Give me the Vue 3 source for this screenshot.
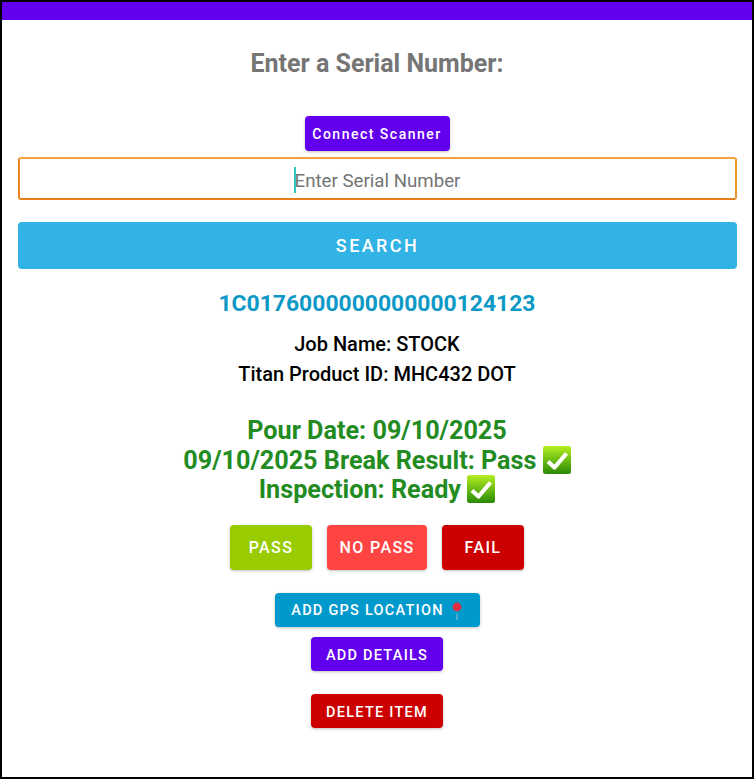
<script setup>
import { ref } from 'vue';

const serial = ref('');

const result = {
  serial: '1C0176000000000000124123',
  job: 'Job Name: STOCK',
  product: 'Titan Product ID: MHC432 DOT',
  pourDate: 'Pour Date: 09/10/2025',
  breakResult: '09/10/2025 Break Result: Pass',
  inspection: 'Inspection: Ready',
};
</script>

<template>
  <div class="frame">
    <div class="top-bar"></div>
    <main class="content">
      <h1 class="title">Enter a Serial Number:</h1>
      <button class="btn btn-connect">Connect Scanner</button>
      <div class="input-wrap">
        <input v-model="serial" class="serial-input" type="text" placeholder="Enter Serial Number">
        <span v-if="!serial" class="caret"></span>
      </div>
      <button class="btn btn-search">SEARCH</button>

      <div class="serial">{{ result.serial }}</div>
      <div class="info first">{{ result.job }}</div>
      <div class="info">{{ result.product }}</div>

      <div class="status">
        <div class="status-line">{{ result.pourDate }}</div>
        <div class="status-line">
          {{ result.breakResult }}
          <svg class="check" viewBox="0 0 28 28">
            <defs>
              <linearGradient id="checkFill" x1="0" y1="0" x2="0" y2="1">
                <stop offset="0" stop-color="#b5ee22" />
                <stop offset="0.55" stop-color="#66b812" />
                <stop offset="1" stop-color="#2a8a05" />
              </linearGradient>
            </defs>
            <rect width="28" height="28" rx="2.5" fill="url(#checkFill)" />
            <path d="M5 15.5 L11.5 21.5 L23.5 7.5" fill="none" stroke="#fff" stroke-width="4.2" stroke-linejoin="round" />
          </svg>
        </div>
        <div class="status-line">
          {{ result.inspection }}
          <svg class="check" viewBox="0 0 28 28">
            <rect width="28" height="28" rx="2.5" fill="url(#checkFill)" />
            <path d="M5 15.5 L11.5 21.5 L23.5 7.5" fill="none" stroke="#fff" stroke-width="4.2" stroke-linejoin="round" />
          </svg>
        </div>
      </div>

      <div class="result-buttons">
        <button class="btn btn-result btn-pass">PASS</button>
        <button class="btn btn-result btn-nopass">NO PASS</button>
        <button class="btn btn-result btn-fail">FAIL</button>
      </div>

      <button class="btn btn-small btn-gps">
        <span>ADD GPS LOCATION</span>
        <svg class="pin" viewBox="0 0 12 18">
          <path d="M6 8 L6.6 17.5 L5.4 17.5 Z" fill="#b9c4cc" />
          <circle cx="6" cy="5" r="4.4" fill="#dd2e44" />
        </svg>
      </button>
      <button class="btn btn-small btn-details">ADD DETAILS</button>
      <button class="btn btn-small btn-delete">DELETE ITEM</button>
    </main>
  </div>
</template>

<style scoped>
.frame {
  box-sizing: border-box;
  width: 754px;
  height: 779px;
  border: 2px solid #000;
  background: #fff;
  font-family: Roboto, "Liberation Sans", sans-serif;
}

.top-bar {
  height: 18px;
  background: #6200ee;
}

.content {
  display: flex;
  flex-direction: column;
  align-items: center;
  padding: 0 16px;
}

.title {
  margin: 28px 0 0;
  font-size: 25px;
  line-height: 32px;
  font-weight: 700;
  color: #757575;
}

.btn {
  border: none;
  border-radius: 4px;
  color: #fff;
  font-family: inherit;
  font-weight: 500;
  cursor: pointer;
  box-shadow: 0 1px 3px rgba(0, 0, 0, 0.25);
}

.btn-connect {
  margin-top: 36px;
  width: 145px;
  height: 35px;
  padding: 0;
  background: #6200ee;
  font-size: 14px;
  letter-spacing: 1.5px;
}

.input-wrap {
  position: relative;
  align-self: flex-start;
  margin-top: 6px;
  width: 719px;
}

.serial-input {
  display: block;
  box-sizing: border-box;
  width: 100%;
  height: 43px;
  padding: 5px 0 0;
  border: 2px solid;
  border-color: #f4a33c #ee9530 #e57d18 #e9851f;
  border-radius: 3px;
  outline: none;
  text-align: center;
  font-family: inherit;
  font-size: 18.7px;
  color: #333;
}

.serial-input::placeholder {
  color: #757575;
  opacity: 1;
}

.caret {
  position: absolute;
  left: 276px;
  top: 10px;
  width: 2px;
  height: 26px;
  background: #2fc4c0;
}

.btn-search {
  align-self: flex-start;
  margin-top: 22px;
  width: 719px;
  height: 47px;
  background: #31b3e5;
  font-size: 18px;
  letter-spacing: 2.4px;
  box-shadow: none;
}

.serial {
  margin-top: 21px;
  font-size: 22.9px;
  line-height: 28px;
  font-weight: 700;
  color: #0d99c6;
}

.info {
  font-size: 20px;
  line-height: 30px;
  font-weight: 500;
  color: #000;
}

.info.first {
  margin-top: 11px;
}

.status {
  margin-top: 27px;
  text-align: center;
  font-size: 25.2px;
  font-weight: 700;
  color: #228b22;
}

.status-line {
  height: 29.5px;
  line-height: 29.5px;
}

.check {
  width: 28px;
  height: 28px;
  vertical-align: -5px;
}

.result-buttons {
  display: flex;
  gap: 15px;
  margin-top: 20px;
}

.btn-result {
  height: 45px;
  padding: 0;
  font-size: 16px;
  letter-spacing: 1.4px;
}

.btn-pass {
  width: 82px;
  background: #99cc00;
}

.btn-nopass {
  width: 100px;
  background: #ff4444;
}

.btn-fail {
  width: 82px;
  background: #cc0000;
}

.btn-small {
  height: 34px;
  padding: 3px 0 0;
  font-size: 14.5px;
  letter-spacing: 1.25px;
}

.btn-gps {
  display: flex;
  align-items: center;
  justify-content: center;
  gap: 7px;
  margin-top: 23px;
  padding-top: 2px;
  width: 205px;
  background: #0099cc;
}

.pin {
  width: 12px;
  height: 18px;
}

.btn-details {
  margin-top: 10px;
  width: 132px;
  background: #6200ee;
}

.btn-delete {
  margin-top: 23px;
  width: 132px;
  background: #cc0000;
}
</style>
